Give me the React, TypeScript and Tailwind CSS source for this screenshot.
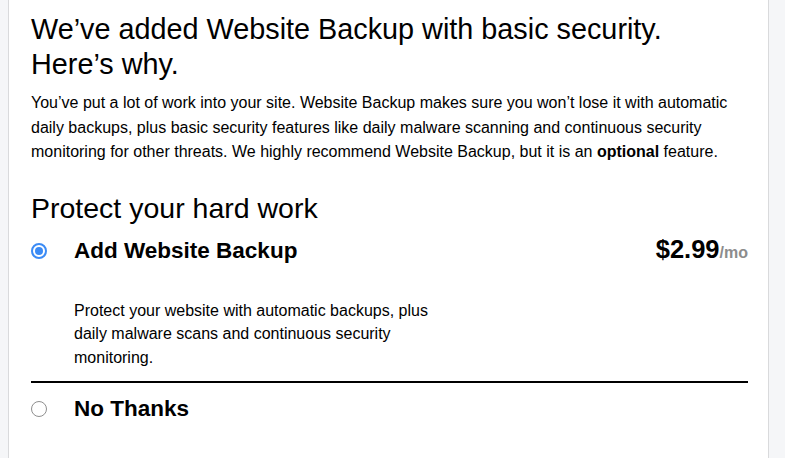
import React from "react";

function Radio({ checked }: { checked: boolean }) {
  return checked ? (
    <span className="flex h-[16px] w-[16px] shrink-0 items-center justify-center rounded-full border-[2px] border-[#3b8bf5] bg-white">
      <span className="h-[8px] w-[8px] rounded-full bg-[#3b8bf5]" />
    </span>
  ) : (
    <span className="h-[16px] w-[16px] shrink-0 rounded-full border-[1.5px] border-[#8f8f8f] bg-white" />
  );
}

export default function App() {
  return (
    <div className="flex min-h-[458px] w-full bg-[#f5f6f8] pl-[8px] pr-[16px]" style={{ fontFamily: '"Liberation Sans", Arial, sans-serif' }}>
      <div className="flex-1 border-x border-[#d9dadc] bg-white pl-[22px] pr-[20px] pt-[12px] text-black">
        <h1 className="text-[28.8px] leading-[35px] font-normal">
          We’ve added Website Backup with basic security.
          <br />
          Here’s why.
        </h1>
        <p className="mt-[9px] text-[16px] leading-[24.5px]">
          You’ve put a lot of work into your site. Website Backup makes sure you won’t lose it with automatic daily backups, plus basic security features like daily malware scanning and continuous security monitoring for other threats. We highly recommend Website Backup, but it is an <b>optional</b> feature.
        </p>
        <h2 className="mt-[27px] text-[28.5px] leading-[32px] font-normal">Protect your hard work</h2>
        <div className="mt-[14px] flex h-[26px] items-center">
          <Radio checked />
          <span className="ml-[27px] text-[22.5px] font-bold leading-[26px]">Add Website Backup</span>
          <span className="ml-auto text-[25.5px] font-bold leading-[26px]">
            $2.99<span className="text-[16px] text-[#8c8c8c]">/mo</span>
          </span>
        </div>
        <p className="mt-[35px] ml-[43px] w-[380px] text-[16px] leading-[23.5px]">
          Protect your website with automatic backups, plus daily malware scans and continuous security monitoring.
        </p>
        <div className="mt-[12px] h-[2px] bg-black" />
        <div className="mt-[13px] flex h-[26px] items-center">
          <Radio checked={false} />
          <span className="ml-[27px] text-[22.5px] font-bold leading-[26px]">No Thanks</span>
        </div>
      </div>
    </div>
  );
}
